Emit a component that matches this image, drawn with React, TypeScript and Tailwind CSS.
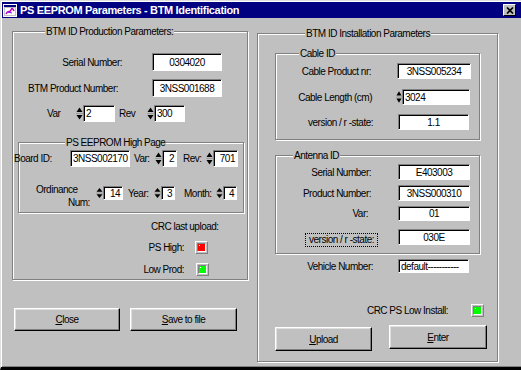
import React from "react";

const FONT = "font-['Liberation_Sans',Arial,sans-serif] tracking-[-0.5px]";

function Etched({ className = "", legend, legendPos = "", children }: { className?: string; legend?: string; legendPos?: string; children?: React.ReactNode }) {
  return (
    <div className={`relative border border-[#808080] shadow-[inset_1px_1px_0_#fff,1px_1px_0_#fff] ${className}`}>
      {legend && (
        <div className={`absolute top-[-7px] h-[13px] bg-[#c0c0c0] px-[1px] whitespace-nowrap ${legendPos}`}>{legend}</div>
      )}
      {children}
    </div>
  );
}

function Field({ className = "", align = "center", children }: { className?: string; align?: "center" | "left" | "right"; children?: React.ReactNode }) {
  const al = align === "center" ? "justify-center" : align === "right" ? "justify-end pr-[2px]" : "justify-start pl-[2px]";
  return (
    <div className={`flex shrink-0 items-center overflow-hidden whitespace-nowrap bg-white border border-t-[#808080] border-l-[#808080] border-r-white border-b-white shadow-[inset_1px_1px_0_#000] ${al} ${className}`}>
      {children}
    </div>
  );
}

function Spin({ className = "w-[7px] h-[17px]" }: { className?: string }) {
  return (
    <svg viewBox="0 0 7 17" preserveAspectRatio="none" className={`shrink-0 ${className}`}>
      <polygon points="0.5,7 3.5,2.5 6.5,7" fill="#000" />
      <line x1="0" y1="8.5" x2="7" y2="8.5" stroke="#808080" strokeWidth="0.6" />
      <polygon points="0.5,10 3.5,14.5 6.5,10" fill="#000" />
    </svg>
  );
}

function Led({ color, className = "" }: { color: string; className?: string }) {
  return (
    <div className={`w-[13px] h-[13px] shrink-0 border border-t-white border-l-white border-r-[#808080] border-b-[#808080] p-[1px] ${className}`}>
      <div className={`relative w-full h-full border border-t-[#808080] border-l-[#808080] border-r-white border-b-white ${color}`}>
        <div className="absolute left-[1px] top-[1px] w-[1px] h-[1px] bg-white" />
      </div>
    </div>
  );
}

function Btn({ u, rest, className = "" }: { u: string; rest: string; className?: string }) {
  return (
    <div className={`flex shrink-0 items-center justify-center border border-t-white border-l-white border-r-black border-b-black shadow-[inset_-1px_-1px_0_#808080,inset_1px_1px_0_#dfdfdf] ${className}`}>
      <span>
        <span className="underline underline-offset-[1px]">{u}</span>
        {rest}
      </span>
    </div>
  );
}

function TitleIcon() {
  return (
    <svg viewBox="0 0 14 13" className="w-[14px] h-[13px] shrink-0">
      <rect x="0.5" y="0.5" width="13" height="12" fill="#c0c0c0" stroke="#fff" />
      <rect x="1" y="1" width="12" height="2" fill="#000080" />
      <rect x="2" y="4" width="10" height="7" fill="#fff" />
      <path d="M3 10 C5 6, 7 9, 8 6 S10 5, 11 7" stroke="#c000c0" strokeWidth="1.5" fill="none" />
      <path d="M5 8 L9 9" stroke="#8000ff" strokeWidth="1" />
    </svg>
  );
}

export default function App() {
  return (
    <div className={`relative w-[521px] h-[370px] overflow-hidden bg-[#c0c0c0] text-black text-[10px] leading-[13px] ${FONT}`}>
      <div className="flex flex-col w-full h-full border-t border-l border-t-[#dfdfdf] border-l-[#dfdfdf] border-b-[3px] border-b-black pt-[1px] pl-[1px] shadow-[inset_1px_1px_0_#fff,inset_0_-1px_0_#808080]">
        {/* Title bar */}
        <div className="flex items-center h-[16px] shrink-0 bg-[#000080] text-white">
          <div className="ml-[1px]">
            <TitleIcon />
          </div>
          <span className="ml-[3px] font-bold text-[11px] tracking-[-0.35px] whitespace-nowrap">
            PS EEPROM Parameters - BTM Identification
          </span>
          <div className="ml-auto mr-[5px] w-[13px] h-[12px] bg-[#c0c0c0] border border-t-white border-l-white border-r-black border-b-black flex items-center justify-center">
            <svg viewBox="0 0 8 7" className="w-[8px] h-[7px]">
              <path d="M1 0.5 L7 6.5 M7 0.5 L1 6.5" stroke="#000" strokeWidth="1.6" />
            </svg>
          </div>
        </div>

        {/* Body */}
        <div className="flex">
          {/* Left column */}
          <div className="ml-[10px] mt-[13px] w-[236px] flex flex-col">
            <Etched className="h-[249px] flex flex-col" legend="BTM ID Production Parameters:" legendPos="left-[32px]">
              <div className="mt-[21px] h-[18px] flex items-center">
                <span className="w-[109px] text-right whitespace-nowrap">Serial Number:</span>
                <Field className="ml-[30px] w-[70px] h-[18px]">0304020</Field>
              </div>
              <div className="mt-[8px] h-[18px] flex items-center">
                <span className="w-[105px] text-right whitespace-nowrap">BTM Product Number:</span>
                <Field className="ml-[34px] w-[70px] h-[18px]">3NSS001688</Field>
              </div>
              <div className="mt-[8px] h-[17px] flex items-center">
                <span className="ml-[34px] w-[29px]">Var</span>
                <Spin />
                <Field className="w-[32px] h-[17px]" align="left">2</Field>
                <span className="ml-[4px] w-[28px]">Rev</span>
                <Spin />
                <Field className="w-[31px] h-[17px]" align="left">300</Field>
              </div>

              <Etched className="ml-[5px] mt-[20px] w-[226px] h-[71px] flex flex-col" legend="PS EEPROM High Page" legendPos="left-[46px]">
                <div className="mt-[7px] h-[17px] flex items-center">
                  <span className="ml-[-5px] w-[56px] whitespace-nowrap">Board ID:</span>
                  <Field className="w-[60px] h-[17px]" align="left">3NSS002170</Field>
                  <span className="ml-[4px] w-[21px]">Var:</span>
                  <Spin />
                  <Field className="w-[15px] h-[17px]" align="right">2</Field>
                  <span className="ml-[6px] w-[23px]">Rev:</span>
                  <Spin />
                  <Field className="w-[25px] h-[17px]" align="right">701</Field>
                </div>
                <div className="mt-[19px] h-[14px] flex items-start">
                  <div className="w-[77px] mt-[-3px] flex flex-col whitespace-nowrap">
                    <span className="pl-[17px]">Ordinance</span>
                    <span className="pl-[49px]">Num:</span>
                  </div>
                  <Spin className="w-[7px] h-[14px]" />
                  <Field className="w-[20px] h-[14px]" align="right">14</Field>
                  <span className="self-center ml-[5px] w-[26px]">Year:</span>
                  <Spin className="w-[7px] h-[14px]" />
                  <Field className="w-[14px] h-[14px]" align="right">3</Field>
                  <span className="self-center ml-[9px] w-[32px]">Month:</span>
                  <Spin className="w-[7px] h-[14px]" />
                  <Field className="w-[14px] h-[14px]" align="right">4</Field>
                </div>
              </Etched>

              <div className="mt-[7px] h-[13px] ml-[138px] whitespace-nowrap">CRC last upload:</div>
              <div className="mt-[8px] h-[13px] flex items-center">
                <span className="w-[171px] text-right">PS High:</span>
                <Led className="ml-[11px]" color="bg-[#ff0000]" />
              </div>
              <div className="mt-[9px] h-[13px] flex items-center">
                <span className="w-[171px] text-right">Low Prod:</span>
                <Led className="ml-[12px]" color="bg-[#00ff00]" />
              </div>
            </Etched>

            <div className="mt-[28px] flex">
              <Btn className="ml-[2px] w-[106px] h-[23px]" u="C" rest="lose" />
              <Btn className="ml-[10px] w-[107px] h-[23px]" u="S" rest="ave to file" />
            </div>
          </div>

          {/* Right column */}
          <Etched className="ml-[9px] mt-[15px] w-[241px] h-[329px] flex flex-col" legend="BTM ID Installation Parameters" legendPos="left-[47px]">
            <Etched className="ml-[17px] mt-[19px] w-[205px] h-[87px] flex flex-col" legend="Cable ID" legendPos="left-[23px]">
              <div className="mt-[9px] h-[16px] flex items-center">
                <span className="w-[95px] text-right whitespace-nowrap">Cable Product nr:</span>
                <Field className="ml-[26px] w-[74px] h-[16px]">3NSS005234</Field>
              </div>
              <div className="mt-[10px] h-[16px] flex items-center">
                <span className="w-[96px] text-right whitespace-nowrap">Cable Length (cm)</span>
                <Spin className="ml-[24px] w-[6px] h-[16px]" />
                <Field className="w-[68px] h-[16px]" align="left">3024</Field>
              </div>
              <div className="mt-[9px] h-[16px] flex items-center">
                <span className="w-[97px] text-right whitespace-nowrap">version / r -state:</span>
                <Field className="ml-[25px] w-[71px] h-[16px]">1.1</Field>
              </div>
            </Etched>

            <Etched className="ml-[17px] mt-[15px] w-[205px] h-[99px] flex flex-col" legend="Antenna ID" legendPos="left-[17px]">
              <div className="mt-[8px] h-[16px] flex items-center">
                <span className="w-[95px] text-right whitespace-nowrap">Serial Number:</span>
                <Field className="ml-[27px] w-[72px] h-[16px]">E403003</Field>
              </div>
              <div className="mt-[5px] h-[16px] flex items-center">
                <span className="w-[95px] text-right whitespace-nowrap">Product Number:</span>
                <Field className="ml-[27px] w-[72px] h-[16px]">3NSS000310</Field>
              </div>
              <div className="mt-[5px] h-[15px] flex items-center">
                <span className="w-[92px] text-right">Var:</span>
                <Field className="ml-[30px] w-[72px] h-[15px]">01</Field>
              </div>
              <div className="mt-[8px] h-[16px] flex items-start">
                <div className="w-[102px] mt-[4px] flex justify-end">
                  <span className="h-[14px] leading-[12px] px-[3px] border border-dotted border-black whitespace-nowrap">version / r -state:</span>
                </div>
                <Field className="ml-[20px] w-[72px] h-[16px]">030E</Field>
              </div>
            </Etched>

            <div className="mt-[5px] h-[14px] flex items-center">
              <span className="w-[115px] text-right whitespace-nowrap">Vehicle Number:</span>
              <Field className="ml-[25px] w-[71px] h-[14px]" align="left">default-----------</Field>
            </div>

            <div className="mt-[30px] h-[14px] flex items-center">
              <span className="w-[190px] text-right whitespace-nowrap">CRC PS Low Install:</span>
              <Led className="ml-[23px]" color="bg-[#00ff00]" />
            </div>

            <div className="mt-[8px] flex items-start">
              <Btn className="ml-[17px] mt-[2px] w-[97px] h-[24px]" u="U" rest="pload" />
              <Btn className="ml-[17px] w-[98px] h-[24px]" u="E" rest="nter" />
            </div>
          </Etched>
        </div>
      </div>
    </div>
  );
}
